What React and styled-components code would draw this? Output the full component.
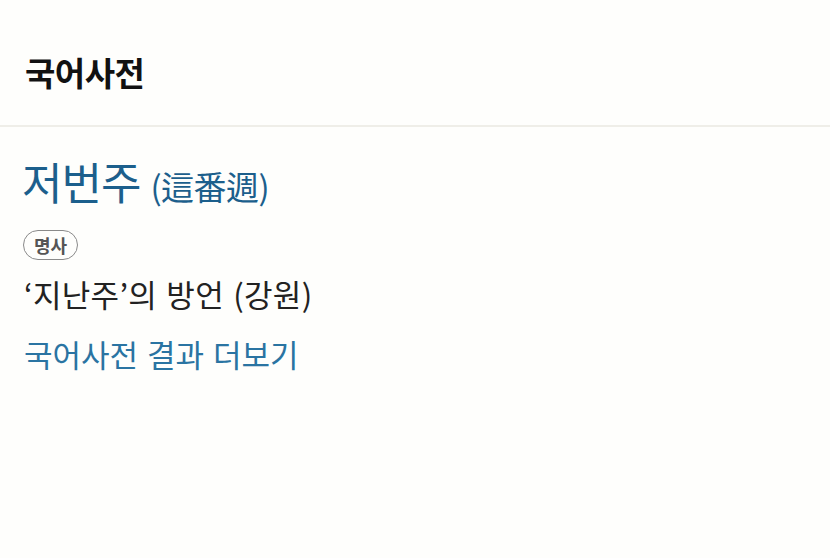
import React from "react";
import styled, { createGlobalStyle } from "styled-components";

const GlobalStyle = createGlobalStyle`
  html, body {
    margin: 0;
    padding: 0;
    background: #fefefc;
  }
  body {
    font-family: "Noto Sans CJK KR", "Noto Sans", sans-serif;
  }
`;

const Wrap = styled.div`
  width: 830px;
  height: 558px;
  background: #fefefc;
  overflow: hidden;
`;

const Header = styled.div`
  height: 127px;
  padding: 49px 25px 0;
  border-bottom: 2px solid #efeee8;
  box-sizing: border-box;
`;

const HeaderTitle = styled.h2`
  margin: 0;
  font-size: 33px;
  line-height: 46px;
  font-weight: 700;
  color: #111;
  letter-spacing: -0.5px;
`;

const Body = styled.div`
  padding: 28px 22px 0;
  display: flex;
  flex-direction: column;
  align-items: flex-start;
`;

const Entry = styled.div`
  display: flex;
  align-items: baseline;
  gap: 10px;
  line-height: 1.2;
`;

const Word = styled.span`
  font-size: 44px;
  font-weight: 400;
  color: #1c5f8c;
  letter-spacing: -1px;
`;

const Hanja = styled.span`
  font-size: 33px;
  color: #1c5f8c;
  letter-spacing: -0.5px;
`;

const Tag = styled.span`
  margin: 22px 0 0 1px;
  padding: 0 10px;
  height: 28px;
  display: inline-flex;
  align-items: center;
  border: 1.5px solid #8a8a8a;
  border-radius: 15px;
  font-size: 18px;
  font-weight: 700;
  color: #555;
`;

const Meaning = styled.p`
  margin: 14px 0 0 2px;
  font-size: 31px;
  line-height: 40px;
  color: #222;
  letter-spacing: 0.3px;
  word-spacing: 2px;
`;

const MoreLink = styled.a`
  margin: 20px 0 0 2px;
  font-size: 31px;
  line-height: 40px;
  color: #2a74a2;
  text-decoration: none;
  word-spacing: 2px;
`;

export default function App() {
  return (
    <Wrap>
      <GlobalStyle />
      <Header>
        <HeaderTitle>국어사전</HeaderTitle>
      </Header>
      <Body>
        <Entry>
          <Word>저번주</Word>
          <Hanja>(這番週)</Hanja>
        </Entry>
        <Tag>명사</Tag>
        <Meaning>‘지난주’의 방언 (강원)</Meaning>
        <MoreLink href="#">국어사전 결과 더보기</MoreLink>
      </Body>
    </Wrap>
  );
}
